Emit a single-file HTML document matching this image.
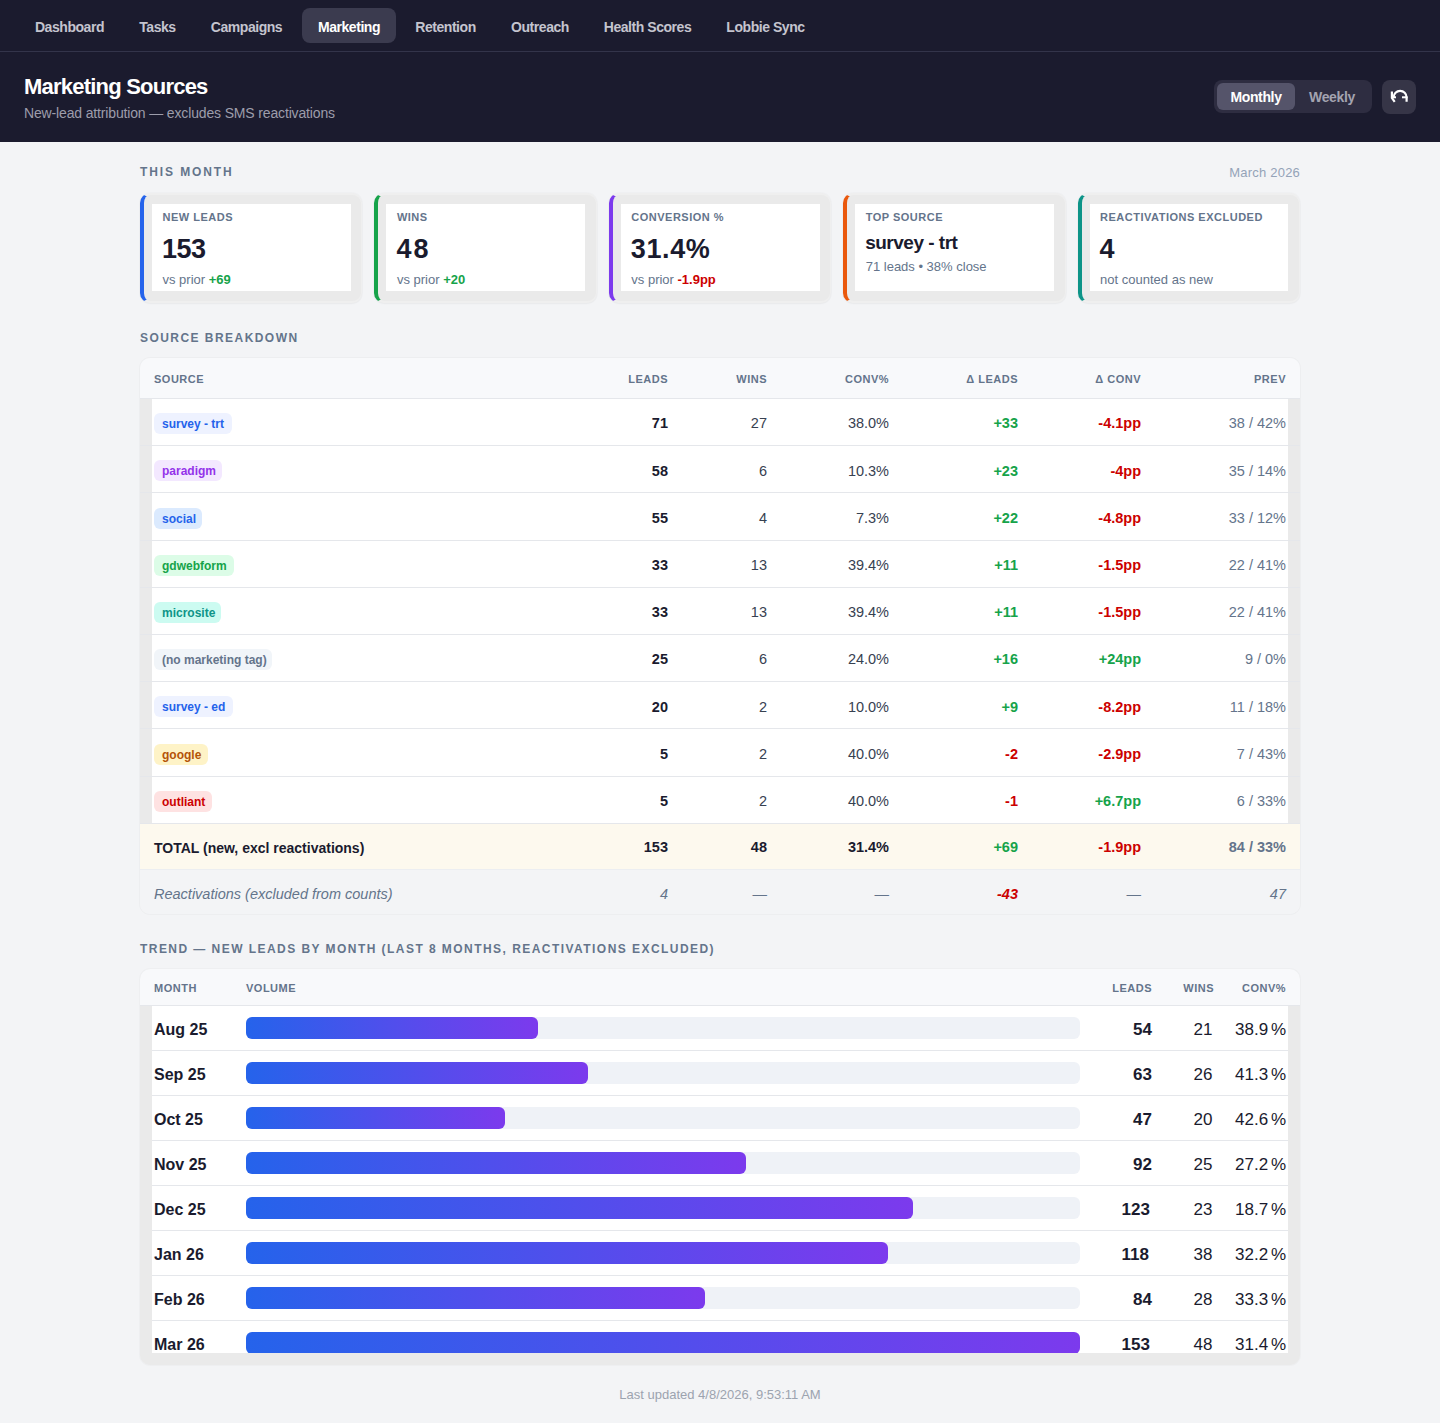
<!DOCTYPE html>
<html><head><meta charset="utf-8"><title>Marketing Sources</title>
<style>
*{box-sizing:border-box;margin:0;padding:0}
html,body{width:1440px;height:1423px;overflow:hidden}
body{background:#f3f4f6;font-family:"Liberation Sans",sans-serif;color:#1a1b2e;position:relative}
.abs{position:absolute}
/* top */
.top{position:absolute;left:0;top:0;width:1440px;height:142px;background:#1b1b2e}
.nav{position:absolute;left:0;top:0;width:1440px;height:52px;border-bottom:1px solid #33344a}
.ni{position:absolute;top:9.5px;height:35px;line-height:35px;font-size:14px;letter-spacing:-0.45px;font-weight:700;color:#c4c4ce;text-align:center;border-radius:8px;white-space:nowrap}
.ni.on{background:#3b3b4f;color:#fff;top:8px;line-height:38px;height:35px}
.title{position:absolute;left:24px;top:74px;font-size:22px;letter-spacing:-0.78px;font-weight:700;color:#fff;white-space:nowrap}
.sub{position:absolute;left:24px;top:105px;font-size:14px;letter-spacing:-0.15px;color:#9d9dab;white-space:nowrap}
.tog{position:absolute;left:1214px;top:80px;width:158px;height:33px;background:#2e2d41;border-radius:8px}
.tog .on{position:absolute;left:3px;top:3px;width:78px;height:27px;background:#55546a;border-radius:6px;color:#fff;font-weight:700;font-size:14px;letter-spacing:-0.35px;text-align:center;line-height:29px}
.tog .off{position:absolute;left:81px;top:3px;width:74px;height:27px;color:#a3a3b0;font-weight:700;font-size:14px;letter-spacing:-0.35px;text-align:center;line-height:29px}
.ref{position:absolute;left:1382px;top:80px;width:34px;height:34px;background:#363547;border-radius:8px}
/* section labels */
.lbl{position:absolute;left:140px;font-size:12px;font-weight:700;color:#64748b;letter-spacing:1.45px;white-space:nowrap}
/* kpi */
.kpi{position:absolute;top:193.3px;width:222.4px;height:109.5px;background:#eaeaea;border-radius:10px;border:1.5px solid #efefef;border-top-width:2px;border-bottom-width:2.5px;border-left:4px solid #2563eb;box-shadow:0 0 0 1px rgba(0,0,0,0.015),0 1px 2px rgba(0,0,0,0.03)}
.kpi .in{position:absolute;left:8px;top:9px;right:10.5px;bottom:9.5px;background:#fff}
.kpi .k{position:absolute;left:10.5px;top:6.5px;font-size:11px;font-weight:700;color:#64748b;letter-spacing:0.5px;white-space:nowrap}
.kpi .v{position:absolute;left:10px;top:29.5px;font-size:27px;letter-spacing:-0.5px;font-weight:700;color:#1a1b2e;white-space:nowrap}
.kpi .s{position:absolute;left:10.5px;top:67.5px;font-size:13px;color:#64748b;white-space:nowrap}
/* trend */
.trcard{position:absolute;left:140px;top:969px;width:1160px;height:395.5px;background:#eaeaea;border-radius:10px;overflow:hidden;box-shadow:0 0 0 1px rgba(0,0,0,0.02)}
.trhead{position:absolute;left:0;top:0;width:1160px;height:37px;background:#f8f9fb;border-bottom:1px solid #e5e7eb}
.trbody{position:absolute;left:12px;top:37px;width:1136px;height:347px;background:#fff;overflow:hidden}
.trr{position:absolute;left:0;width:1136px;height:45px;border-bottom:1px solid #e5e7eb}
.mo{position:absolute;left:2px;top:2px;height:44px;line-height:44px;font-size:16px;font-weight:700;color:#1a1b2e;white-space:nowrap}
.trk{position:absolute;left:94px;top:11px;width:834px;height:22px;background:#eff2f7;border-radius:6px}
.fill{position:absolute;left:0;top:0;height:22px;border-radius:6px;background:linear-gradient(90deg,#2563eb,#7c3aed)}
.tn{position:absolute;top:2px;width:100px;height:44px;line-height:44px;text-align:right;font-size:17px;color:#1a1b2e;white-space:nowrap}
.tn.b{font-weight:700}
/* source table */
.tcard{position:absolute;left:140px;width:1160px;background:#f3f4f6;border-radius:10px;box-shadow:0 0 0 1px rgba(0,0,0,0.025);overflow:hidden}
.thead{position:absolute;left:140px;width:1160px;background:#f8f9fb;border-bottom:1px solid #e5e7eb;border-radius:10px 10px 0 0}
.h{position:absolute;font-size:11px;font-weight:700;color:#64748b;letter-spacing:0.5px;white-space:nowrap}
.brow{position:absolute;left:140px;width:1160px;height:47.2px;background:#fff;border-bottom:1px solid #e5e7eb;box-shadow:inset 12px 0 0 #eaeaea,inset -12px 0 0 #eaeaea}
.badge{position:absolute;height:21px;line-height:22px;border-radius:6px;font-size:12px;font-weight:700;padding-left:8px;white-space:nowrap}
.c{position:absolute;width:200px;text-align:right;font-size:14.5px;color:#374151;white-space:nowrap}
.c.b{font-weight:700;color:#1a1b2e}
.c.pv{color:#64748b}
.c.it{font-style:italic;color:#64748b}
.trow{position:absolute;left:140px;width:1160px;height:45px;background:#fdf9ee}
.rrow{position:absolute;left:140px;width:1160px;height:44.5px;background:#f3f4f6;border-top:1px solid #eceef1;border-radius:0 0 10px 10px}
.g,.c.g{color:#16a34a;font-weight:700}
.r,.c.r{color:#cc0000;font-weight:700}
</style></head>
<body>
<div class="top">
  <div class="nav">
    <div class="ni" style="left:20px;width:99px">Dashboard</div>
    <div class="ni" style="left:123px;width:69px">Tasks</div>
    <div class="ni" style="left:195px;width:103px">Campaigns</div>
    <div class="ni on" style="left:302px;width:94px">Marketing</div>
    <div class="ni" style="left:400px;width:91px">Retention</div>
    <div class="ni" style="left:495px;width:90px">Outreach</div>
    <div class="ni" style="left:588px;width:119px">Health Scores</div>
    <div class="ni" style="left:711px;width:109px">Lobbie Sync</div>
  </div>
  <div class="title">Marketing Sources</div>
  <div class="sub">New-lead attribution — excludes SMS reactivations</div>
  <div class="tog"><div class="on">Monthly</div><div class="off">Weekly</div></div>
  <div class="ref"><svg width="34" height="34" viewBox="0 0 34 34" fill="none" stroke="#fff" stroke-width="2.2"><path d="M11.6 17.4 A6.5 6.5 0 0 1 24.6 17.4 V21.8"/><path d="M20 17.3 H25.6" stroke-width="2"/><path d="M9.9 11.6 V18 L12.7 21.8"/><path d="M11 17.3 H14" stroke-width="2"/></svg></div>
</div>

<div class="lbl" style="top:165px;letter-spacing:1.9px">THIS MONTH</div>
<div class="abs" style="left:1160px;top:164.5px;width:140px;text-align:right;font-size:13px;letter-spacing:0.2px;color:#94a3b8">March 2026</div>

<div class="kpi" style="left:140px;border-left-color:#2563eb"><div class="in"><div class="k">NEW LEADS</div><div class="v">153</div><div class="s">vs prior <span class="g">+69</span></div></div></div>
<div class="kpi" style="left:374.4px;border-left-color:#16a34a"><div class="in"><div class="k">WINS</div><div class="v" style="letter-spacing:2px">48</div><div class="s">vs prior <span class="g">+20</span></div></div></div>
<div class="kpi" style="left:608.8px;border-left-color:#7c3aed"><div class="in"><div class="k">CONVERSION %</div><div class="v" style="letter-spacing:0.6px">31.4%</div><div class="s">vs prior <span class="r">-1.9pp</span></div></div></div>
<div class="kpi" style="left:843.2px;border-left-color:#ea580c"><div class="in"><div class="k">TOP SOURCE</div><div class="v" style="font-size:19px;top:27.5px">survey - trt</div><div class="s" style="top:55px">71 leads • 38% close</div></div></div>
<div class="kpi" style="left:1077.6px;border-left-color:#0d9488"><div class="in"><div class="k">REACTIVATIONS EXCLUDED</div><div class="v">4</div><div class="s">not counted as new</div></div></div>

<div class="lbl" style="top:331px">SOURCE BREAKDOWN</div>
<!--SRC-->
<div class="tcard" style="top:357.5px;height:556px"></div>
<div class="thead" style="top:357.5px;height:41px"></div>
<div class="h" style="left:154px;top:358.5px;height:41px;line-height:41px">SOURCE</div>
<div class="h" style="left:468px;width:200px;text-align:right;top:358.5px;height:41px;line-height:41px">LEADS</div>
<div class="h" style="left:567px;width:200px;text-align:right;top:358.5px;height:41px;line-height:41px">WINS</div>
<div class="h" style="left:689px;width:200px;text-align:right;top:358.5px;height:41px;line-height:41px">CONV%</div>
<div class="h" style="left:818px;width:200px;text-align:right;top:358.5px;height:41px;line-height:41px">Δ LEADS</div>
<div class="h" style="left:941px;width:200px;text-align:right;top:358.5px;height:41px;line-height:41px">Δ CONV</div>
<div class="h" style="left:1086px;width:200px;text-align:right;top:358.5px;height:41px;line-height:41px">PREV</div>
<div class="brow" style="top:399.0px"></div>
<div class="badge" style="left:154px;top:413.2px;width:78px;background:#eef2ff;color:#2563eb">survey - trt</div>
<div class="c b" style="left:468px;top:400.3px;height:46.2px;line-height:46.2px">71</div>
<div class="c n" style="left:567px;top:400.3px;height:46.2px;line-height:46.2px">27</div>
<div class="c n" style="left:689px;top:400.3px;height:46.2px;line-height:46.2px">38.0%</div>
<div class="c b g" style="left:818px;top:400.3px;height:46.2px;line-height:46.2px">+33</div>
<div class="c b r" style="left:941px;top:400.3px;height:46.2px;line-height:46.2px">-4.1pp</div>
<div class="c pv" style="left:1086px;top:400.3px;height:46.2px;line-height:46.2px">38 / 42%</div>
<div class="brow" style="top:446.2px"></div>
<div class="badge" style="left:154px;top:460.4px;width:68px;background:#f3e8ff;color:#9333ea">paradigm</div>
<div class="c b" style="left:468px;top:447.5px;height:46.2px;line-height:46.2px">58</div>
<div class="c n" style="left:567px;top:447.5px;height:46.2px;line-height:46.2px">6</div>
<div class="c n" style="left:689px;top:447.5px;height:46.2px;line-height:46.2px">10.3%</div>
<div class="c b g" style="left:818px;top:447.5px;height:46.2px;line-height:46.2px">+23</div>
<div class="c b r" style="left:941px;top:447.5px;height:46.2px;line-height:46.2px">-4pp</div>
<div class="c pv" style="left:1086px;top:447.5px;height:46.2px;line-height:46.2px">35 / 14%</div>
<div class="brow" style="top:493.4px"></div>
<div class="badge" style="left:154px;top:507.6px;width:48px;background:#dbeafe;color:#2563eb">social</div>
<div class="c b" style="left:468px;top:494.7px;height:46.2px;line-height:46.2px">55</div>
<div class="c n" style="left:567px;top:494.7px;height:46.2px;line-height:46.2px">4</div>
<div class="c n" style="left:689px;top:494.7px;height:46.2px;line-height:46.2px">7.3%</div>
<div class="c b g" style="left:818px;top:494.7px;height:46.2px;line-height:46.2px">+22</div>
<div class="c b r" style="left:941px;top:494.7px;height:46.2px;line-height:46.2px">-4.8pp</div>
<div class="c pv" style="left:1086px;top:494.7px;height:46.2px;line-height:46.2px">33 / 12%</div>
<div class="brow" style="top:540.6px"></div>
<div class="badge" style="left:154px;top:554.8px;width:80px;background:#dcfce7;color:#16a34a">gdwebform</div>
<div class="c b" style="left:468px;top:541.9px;height:46.2px;line-height:46.2px">33</div>
<div class="c n" style="left:567px;top:541.9px;height:46.2px;line-height:46.2px">13</div>
<div class="c n" style="left:689px;top:541.9px;height:46.2px;line-height:46.2px">39.4%</div>
<div class="c b g" style="left:818px;top:541.9px;height:46.2px;line-height:46.2px">+11</div>
<div class="c b r" style="left:941px;top:541.9px;height:46.2px;line-height:46.2px">-1.5pp</div>
<div class="c pv" style="left:1086px;top:541.9px;height:46.2px;line-height:46.2px">22 / 41%</div>
<div class="brow" style="top:587.8px"></div>
<div class="badge" style="left:154px;top:602.0px;width:67px;background:#ccfbf1;color:#0f9488">microsite</div>
<div class="c b" style="left:468px;top:589.0999999999999px;height:46.2px;line-height:46.2px">33</div>
<div class="c n" style="left:567px;top:589.0999999999999px;height:46.2px;line-height:46.2px">13</div>
<div class="c n" style="left:689px;top:589.0999999999999px;height:46.2px;line-height:46.2px">39.4%</div>
<div class="c b g" style="left:818px;top:589.0999999999999px;height:46.2px;line-height:46.2px">+11</div>
<div class="c b r" style="left:941px;top:589.0999999999999px;height:46.2px;line-height:46.2px">-1.5pp</div>
<div class="c pv" style="left:1086px;top:589.0999999999999px;height:46.2px;line-height:46.2px">22 / 41%</div>
<div class="brow" style="top:635.0px"></div>
<div class="badge" style="left:154px;top:649.2px;width:118px;background:#f1f5f9;color:#64748b">(no marketing tag)</div>
<div class="c b" style="left:468px;top:636.3px;height:46.2px;line-height:46.2px">25</div>
<div class="c n" style="left:567px;top:636.3px;height:46.2px;line-height:46.2px">6</div>
<div class="c n" style="left:689px;top:636.3px;height:46.2px;line-height:46.2px">24.0%</div>
<div class="c b g" style="left:818px;top:636.3px;height:46.2px;line-height:46.2px">+16</div>
<div class="c b g" style="left:941px;top:636.3px;height:46.2px;line-height:46.2px">+24pp</div>
<div class="c pv" style="left:1086px;top:636.3px;height:46.2px;line-height:46.2px">9 / 0%</div>
<div class="brow" style="top:682.2px"></div>
<div class="badge" style="left:154px;top:696.4px;width:79px;background:#eef2ff;color:#2563eb">survey - ed</div>
<div class="c b" style="left:468px;top:683.5px;height:46.2px;line-height:46.2px">20</div>
<div class="c n" style="left:567px;top:683.5px;height:46.2px;line-height:46.2px">2</div>
<div class="c n" style="left:689px;top:683.5px;height:46.2px;line-height:46.2px">10.0%</div>
<div class="c b g" style="left:818px;top:683.5px;height:46.2px;line-height:46.2px">+9</div>
<div class="c b r" style="left:941px;top:683.5px;height:46.2px;line-height:46.2px">-8.2pp</div>
<div class="c pv" style="left:1086px;top:683.5px;height:46.2px;line-height:46.2px">11 / 18%</div>
<div class="brow" style="top:729.4px"></div>
<div class="badge" style="left:154px;top:743.6px;width:54px;background:#fef3c7;color:#b45309">google</div>
<div class="c b" style="left:468px;top:730.6999999999999px;height:46.2px;line-height:46.2px">5</div>
<div class="c n" style="left:567px;top:730.6999999999999px;height:46.2px;line-height:46.2px">2</div>
<div class="c n" style="left:689px;top:730.6999999999999px;height:46.2px;line-height:46.2px">40.0%</div>
<div class="c b r" style="left:818px;top:730.6999999999999px;height:46.2px;line-height:46.2px">-2</div>
<div class="c b r" style="left:941px;top:730.6999999999999px;height:46.2px;line-height:46.2px">-2.9pp</div>
<div class="c pv" style="left:1086px;top:730.6999999999999px;height:46.2px;line-height:46.2px">7 / 43%</div>
<div class="brow" style="top:776.6px"></div>
<div class="badge" style="left:154px;top:790.8px;width:58px;background:#fee2e2;color:#cc0000">outliant</div>
<div class="c b" style="left:468px;top:777.9px;height:46.2px;line-height:46.2px">5</div>
<div class="c n" style="left:567px;top:777.9px;height:46.2px;line-height:46.2px">2</div>
<div class="c n" style="left:689px;top:777.9px;height:46.2px;line-height:46.2px">40.0%</div>
<div class="c b r" style="left:818px;top:777.9px;height:46.2px;line-height:46.2px">-1</div>
<div class="c b g" style="left:941px;top:777.9px;height:46.2px;line-height:46.2px">+6.7pp</div>
<div class="c pv" style="left:1086px;top:777.9px;height:46.2px;line-height:46.2px">6 / 33%</div>
<div class="trow" style="top:824px"></div>
<div class="c b" style="left:154px;top:825.5px;height:45px;line-height:45px;text-align:left;font-size:14px;width:300px">TOTAL (new, excl reactivations)</div>
<div class="c b" style="left:468px;top:825.3px;height:45px;line-height:45px">153</div>
<div class="c b" style="left:567px;top:825.3px;height:45px;line-height:45px">48</div>
<div class="c b" style="left:689px;top:825.3px;height:45px;line-height:45px">31.4%</div>
<div class="c b g" style="left:818px;top:825.3px;height:45px;line-height:45px">+69</div>
<div class="c b r" style="left:941px;top:825.3px;height:45px;line-height:45px">-1.9pp</div>
<div class="c b pv" style="left:1086px;top:825.3px;height:45px;line-height:45px">84 / 33%</div>
<div class="rrow" style="top:869px"></div>
<div class="c it" style="left:154px;top:871.5px;height:45px;line-height:45px;text-align:left;width:300px">Reactivations (excluded from counts)</div>
<div class="c it" style="left:468px;top:871.8px;height:45px;line-height:45px">4</div>
<div class="c it" style="left:567px;top:871.8px;height:45px;line-height:45px">—</div>
<div class="c it" style="left:689px;top:871.8px;height:45px;line-height:45px">—</div>
<div class="c it r" style="left:818px;top:871.8px;height:45px;line-height:45px">-43</div>
<div class="c it" style="left:941px;top:871.8px;height:45px;line-height:45px">—</div>
<div class="c it" style="left:1086px;top:871.8px;height:45px;line-height:45px">47</div>
<!--/SRC-->
<!--TREND-->
<div class="lbl" style="top:941.5px">TREND — NEW LEADS BY MONTH (LAST 8 MONTHS, REACTIVATIONS EXCLUDED)</div>
<div class="trcard"><div class="trbody">
<div class="trr" style="top:0px"><div class="mo">Aug 25</div><div class="trk"><div class="fill" style="width:291.9px"></div></div><div class="tn b" style="left:900px">54</div><div class="tn" style="left:1041.5px;text-align:left">21</div><div class="tn" style="left:1083px;text-align:left">38.9</div><div class="tn" style="left:1034px">%</div></div>
<div class="trr" style="top:45px"><div class="mo">Sep 25</div><div class="trk"><div class="fill" style="width:341.94px"></div></div><div class="tn b" style="left:900px">63</div><div class="tn" style="left:1041.5px;text-align:left">26</div><div class="tn" style="left:1083px;text-align:left">41.3</div><div class="tn" style="left:1034px">%</div></div>
<div class="trr" style="top:90px"><div class="mo">Oct 25</div><div class="trk"><div class="fill" style="width:258.54px"></div></div><div class="tn b" style="left:900px">47</div><div class="tn" style="left:1041.5px;text-align:left">20</div><div class="tn" style="left:1083px;text-align:left">42.6</div><div class="tn" style="left:1034px">%</div></div>
<div class="trr" style="top:135px"><div class="mo">Nov 25</div><div class="trk"><div class="fill" style="width:500.4px"></div></div><div class="tn b" style="left:900px">92</div><div class="tn" style="left:1041.5px;text-align:left">25</div><div class="tn" style="left:1083px;text-align:left">27.2</div><div class="tn" style="left:1034px">%</div></div>
<div class="trr" style="top:180px"><div class="mo">Dec 25</div><div class="trk"><div class="fill" style="width:667.2px"></div></div><div class="tn b" style="left:969.5999999999999px;text-align:left">123</div><div class="tn" style="left:1041.5px;text-align:left">23</div><div class="tn" style="left:1083px;text-align:left">18.7</div><div class="tn" style="left:1034px">%</div></div>
<div class="trr" style="top:225px"><div class="mo">Jan 26</div><div class="trk"><div class="fill" style="width:642.18px"></div></div><div class="tn b" style="left:969.5999999999999px;text-align:left">118</div><div class="tn" style="left:1041.5px;text-align:left">38</div><div class="tn" style="left:1083px;text-align:left">32.2</div><div class="tn" style="left:1034px">%</div></div>
<div class="trr" style="top:270px"><div class="mo">Feb 26</div><div class="trk"><div class="fill" style="width:458.7px"></div></div><div class="tn b" style="left:900px">84</div><div class="tn" style="left:1041.5px;text-align:left">28</div><div class="tn" style="left:1083px;text-align:left">33.3</div><div class="tn" style="left:1034px">%</div></div>
<div class="trr" style="top:315px"><div class="mo">Mar 26</div><div class="trk"><div class="fill" style="width:834.0px"></div></div><div class="tn b" style="left:969.5999999999999px;text-align:left">153</div><div class="tn" style="left:1041.5px;text-align:left">48</div><div class="tn" style="left:1083px;text-align:left">31.4</div><div class="tn" style="left:1034px">%</div></div>
</div>
<div class="trhead"><div class="h" style="left:14px;top:1px;height:36px;line-height:36px">MONTH</div><div class="h" style="left:106px;top:1px;height:36px;line-height:36px">VOLUME</div><div class="h" style="left:812px;width:200px;text-align:right;top:1px;height:36px;line-height:36px">LEADS</div><div class="h" style="left:874px;width:200px;text-align:right;top:1px;height:36px;line-height:36px">WINS</div><div class="h" style="left:946px;width:200px;text-align:right;top:1px;height:36px;line-height:36px">CONV%</div></div>
</div>
<!--/TREND-->
<div class="abs" style="left:0;top:1387px;width:1440px;text-align:center;font-size:13px;color:#9ca3af">Last updated 4/8/2026, 9:53:11 AM</div>
</body></html>
